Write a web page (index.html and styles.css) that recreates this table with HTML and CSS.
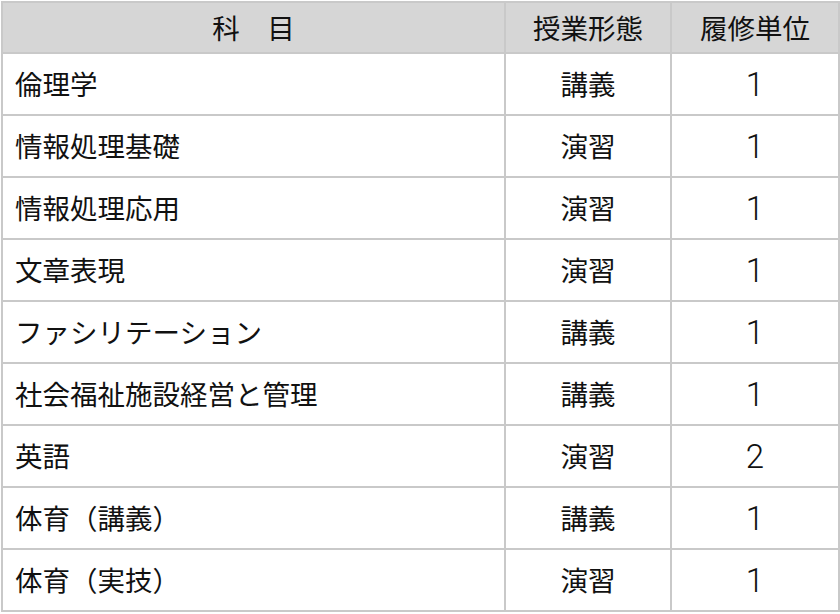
FILE: index.html
```html
<!DOCTYPE html>
<html lang="ja">
<head>
<meta charset="utf-8">
<title>科目一覧</title>
<link rel="stylesheet" href="styles.css">
</head>
<body>
<table class="courses">
  <colgroup>
    <col class="c-subject">
    <col class="c-type">
    <col class="c-unit">
  </colgroup>
  <thead>
    <tr class="head-row">
      <th>科　目</th>
      <th>授業形態</th>
      <th>履修単位</th>
    </tr>
  </thead>
  <tbody>
    <tr><td class="subject">倫理学</td><td class="center">講義</td><td class="center num">1</td></tr>
    <tr><td class="subject">情報処理基礎</td><td class="center">演習</td><td class="center num">1</td></tr>
    <tr><td class="subject">情報処理応用</td><td class="center">演習</td><td class="center num">1</td></tr>
    <tr><td class="subject">文章表現</td><td class="center">演習</td><td class="center num">1</td></tr>
    <tr><td class="subject">ファシリテーション</td><td class="center">講義</td><td class="center num">1</td></tr>
    <tr><td class="subject">社会福祉施設経営と管理</td><td class="center">講義</td><td class="center num">1</td></tr>
    <tr><td class="subject">英語</td><td class="center">演習</td><td class="center num">2</td></tr>
    <tr><td class="subject">体育（講義）</td><td class="center">講義</td><td class="center num">1</td></tr>
    <tr><td class="subject">体育（実技）</td><td class="center">演習</td><td class="center num">1</td></tr>
  </tbody>
</table>
</body>
</html>
```

FILE: styles.css
```css
html, body {
  margin: 0;
  padding: 0;
  background: #ffffff;
}

body {
  padding: 1px 0 0 1px;
  font-family: "Noto Sans CJK JP", "Noto Sans", sans-serif;
  color: #111111;
}

.courses {
  border-collapse: collapse;
  width: 837px;
  table-layout: fixed;
  font-size: 27.5px;
  font-weight: 400;
}

.c-subject { width: 503px; }
.c-type { width: 166px; }
.c-unit { width: 168px; }

.courses th,
.courses td {
  border: 2px solid #c9c9c9;
  padding: 0;
  line-height: 1;
}

.head-row {
  height: 51px;
  background: #d6d6d6;
}

.head-row th {
  font-weight: 400;
  text-align: center;
}

.courses tbody tr {
  height: 62px;
}

.subject {
  padding-left: 12px !important;
  text-align: left;
}

.center {
  text-align: center;
}

.num {
  font-family: Roboto, "Liberation Sans", sans-serif;
  font-weight: 300;
  font-size: 33px;
}
```
